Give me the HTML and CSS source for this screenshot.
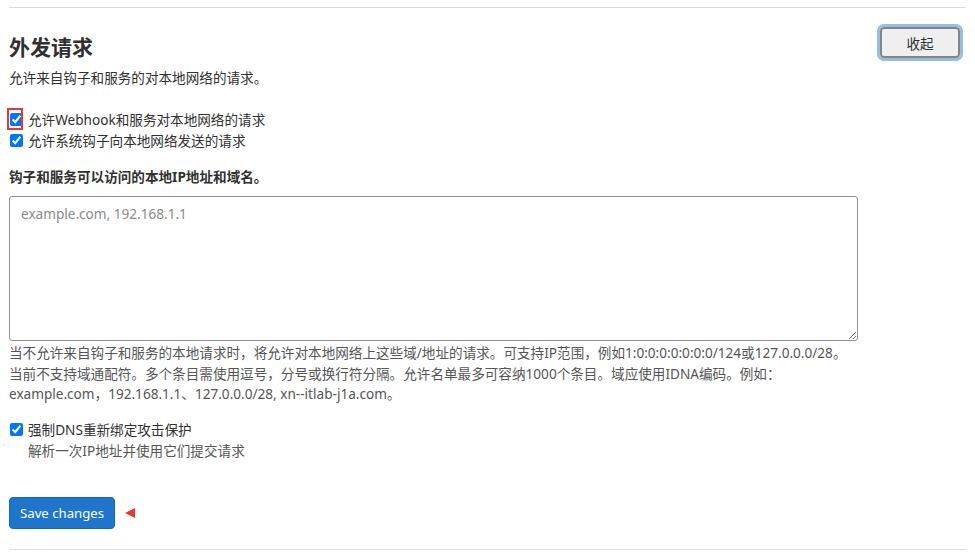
FILE: index.html
```html
<!DOCTYPE html>
<html lang="zh-CN">
<head>
  <meta charset="UTF-8" />
  <meta name="viewport" content="width=device-width, initial-scale=1.0"/>
  <title>外发请求</title>
  <link rel="stylesheet" href="styles.css">
</head>
<body>

  <section class="settings-block">
    <div class="block-header">
      <div>
        <h2>外发请求</h2>
        <p class="lead">允许来自钩子和服务的对本地网络的请求。</p>
      </div>
      <button class="btn-toggle" type="button">收起</button>
    </div>

    <form class="block-body">
      <div class="check-group">
        <label class="check marked"><input type="checkbox" checked> 允许Webhook和服务对本地网络的请求</label>
        <label class="check"><input type="checkbox" checked> 允许系统钩子向本地网络发送的请求</label>
      </div>

      <label class="field-label" for="allowlist">钩子和服务可以访问的本地IP地址和域名。</label>
      <textarea id="allowlist" class="field" placeholder="example.com, 192.168.1.1"></textarea>
      <p class="help">当不允许来自钩子和服务的本地请求时，将允许对本地网络上这些域/地址的请求。可支持IP范围，例如1:0:0:0:0:0:0:0/124或127.0.0.0/28。当前不支持域通配符。多个条目需使用逗号，分号或换行符分隔。允许名单最多可容纳1000个条目。域应使用IDNA编码。例如：example.com，192.168.1.1、127.0.0.0/28, xn--itlab-j1a.com。</p>

      <div class="dns">
        <label class="check"><input type="checkbox" checked> 强制DNS重新绑定攻击保护</label>
        <p class="sub">解析一次IP地址并使用它们提交请求</p>
      </div>

      <div class="actions">
        <button class="btn-save" type="button">Save changes</button>
        <span class="pointer"></span>
      </div>
    </form>
  </section>

</body>
</html>
```

FILE: styles.css
```css
body {
  font-family: 'Noto Sans', 'Noto Sans CJK SC', sans-serif;
  font-size: 14px;
  color: #303030;
  margin: 0;
  padding: 7px 9px 0 9px;
  background: #fff;
}

.settings-block {
  border-top: 1px solid #dcdcde;
  border-bottom: 1px solid #dcdcde;
}

.block-header {
  display: flex;
  justify-content: space-between;
  align-items: flex-start;
  padding-top: 19px;
}

h2 {
  font-size: 21px;
  font-weight: bold;
  margin: 3px 0 0 0;
  line-height: 34px;
}

.lead {
  margin: 4px 0 0 0;
  line-height: 20px;
  font-size: 13.6px;
}

.btn-toggle {
  font-family: inherit;
  font-size: 13.6px;
  color: #303030;
  background: #efefef;
  border: 2px solid #858585;
  border-radius: 4px;
  width: 80px;
  height: 31px;
  margin-right: 6px;
  outline: 3px solid #95bde6;
  outline-offset: 0;
  cursor: pointer;
}

.check-group {
  margin-top: 21px;
}

.check {
  display: flex;
  align-items: center;
  gap: 5px;
  line-height: 21px;
  font-size: 13.6px;
}

.check input {
  width: 13px;
  height: 13px;
  margin: 0 0 0 1px;
}

/* red annotation box round the first checkbox */
.check.marked {
  position: relative;
}

.check.marked::before {
  content: "";
  position: absolute;
  left: -2px;
  top: -1px;
  width: 16px;
  height: 22px;
  border: 2px solid #e8372e;
  box-sizing: border-box;
}

.field-label {
  display: block;
  font-weight: bold;
  font-size: 13.6px;
  margin-top: 16px;
  line-height: 20px;
}

.field {
  display: block;
  box-sizing: border-box;
  width: 849px;
  height: 145px;
  margin-top: 9px;
  padding: 7px 11px;
  font-family: inherit;
  font-size: 13.6px;
  border: 1px solid #8f8f8f;
  border-radius: 3px;
  color: #303030;
}

.field::placeholder {
  color: #8a8a8a;
}

.help {
  margin: 2px 0 0 0;
  line-height: 20.5px;
  font-size: 13.6px;
  color: #555;
  max-width: 850px;
}

.dns {
  margin-top: 14px;
}

.sub {
  margin: 0 0 0 19px;
  line-height: 21px;
  font-size: 13.6px;
  color: #555;
}

.actions {
  display: flex;
  align-items: center;
  gap: 10px;
  margin-top: 36px;
  margin-bottom: 20px;
}

.btn-save {
  font-family: inherit;
  font-size: 13.2px;
  color: #fff;
  background: #1f75cb;
  border: 1px solid #1068bf;
  border-radius: 4px;
  padding: 0 10px;
  height: 32px;
  cursor: pointer;
}

.pointer {
  width: 0;
  height: 0;
  border-top: 5px solid transparent;
  border-bottom: 5px solid transparent;
  border-right: 10px solid #e8372e;
}
```
